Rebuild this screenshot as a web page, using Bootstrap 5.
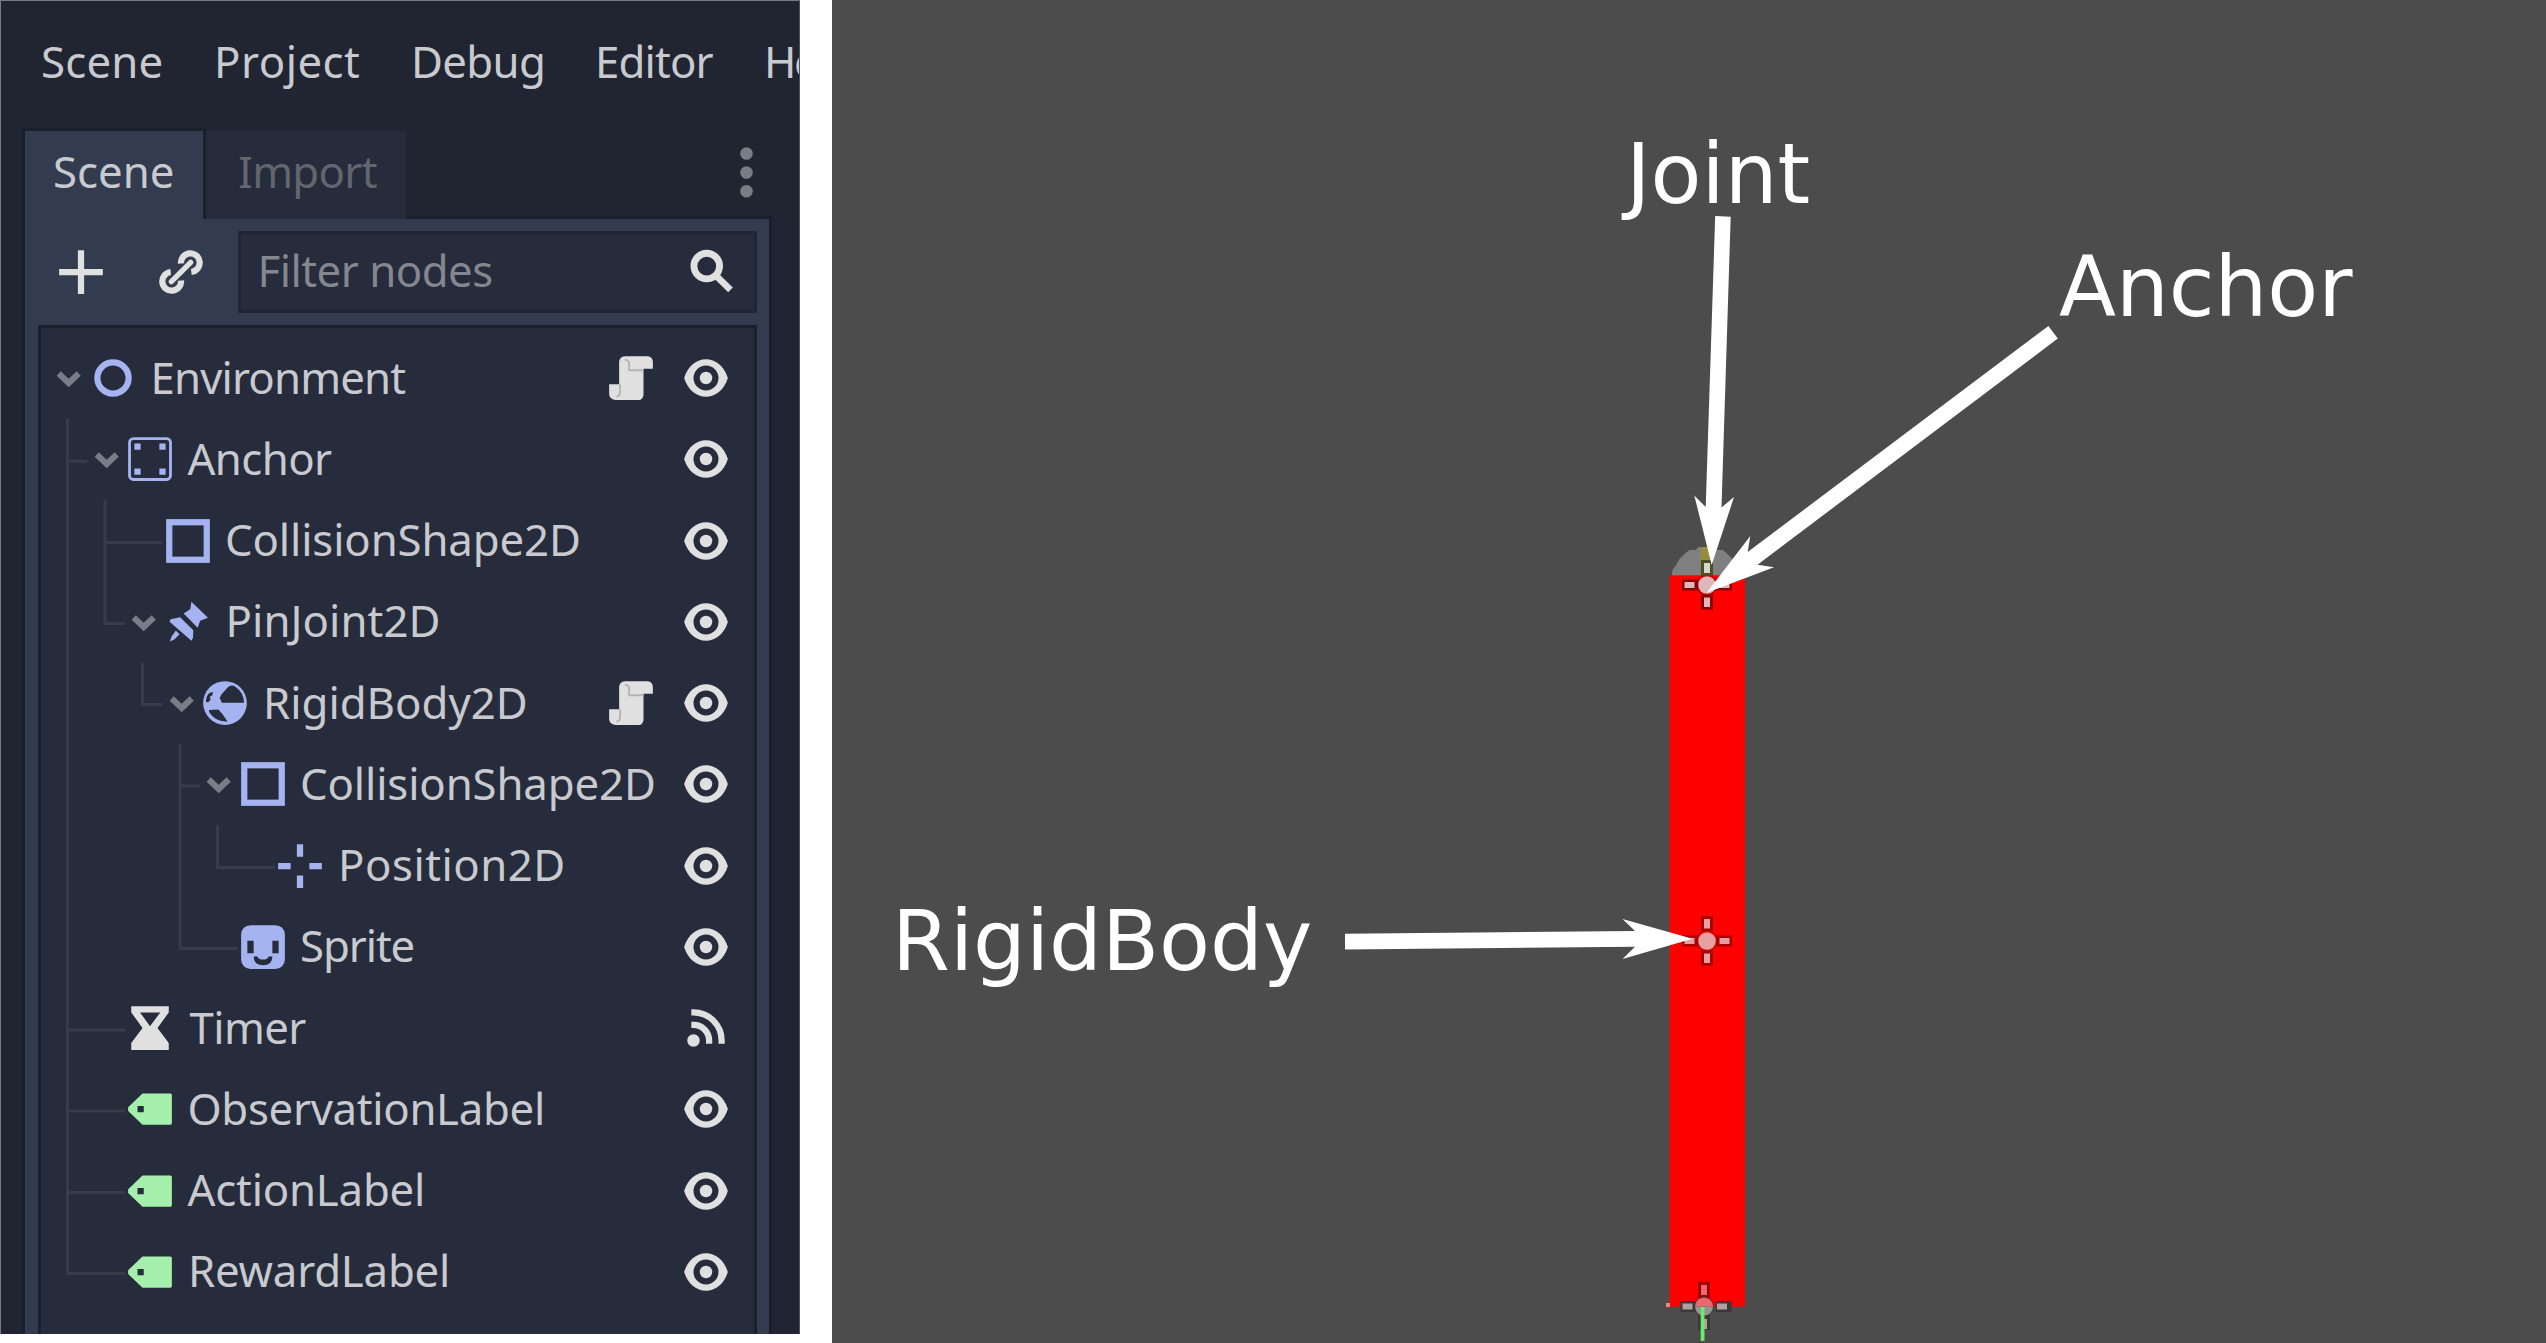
<!DOCTYPE html>
<html lang="en">
<head>
<meta charset="utf-8">
<title>Scene tree</title>
<link href="https://cdn.jsdelivr.net/npm/bootstrap@5.3.0/dist/css/bootstrap.min.css" rel="stylesheet">
<style>
body{margin:0;background:#fff;overflow:hidden}
.stage{width:2546px;height:1343px}
.editor{width:800px;height:1334px;background:#202531;border:solid #777b80;border-width:1px 1px 0 1px;border-right-color:#4b4f58;font:43.75px/60px "Noto Sans",sans-serif;color:#c8cacf;overflow:hidden;white-space:nowrap}
.viewport{width:1714px;height:1343px;background:#4c4c4c}
.menu-row{height:127px;padding:30px 0 0 40px}
.menu-row a{color:inherit;text-decoration:none;flex:none}
.tab-row{height:88px;padding-left:21px}
.tab-on{width:184px;height:91px;background:#333b4f;border:3px solid #191f2b;border-bottom:0;padding:10px 0 0 28px;z-index:1}
.tab-off{width:200px;height:88px;margin-top:3px;background:#262c3b;color:#62666f;padding:10px 0 0 32px}
.dots{width:13px;height:52px;margin:19px 46px 0 auto}
.dock{margin-left:21px;width:750px;height:1118px;background:#333b4f;border:3px solid #191f2b;border-bottom:0;padding:10px 12px 0 13px}
.tool-row{height:86px;padding-left:18px;margin-bottom:10px}
.filter{width:519px;height:82px;margin-left:32px;background:#262c3b;border:3px solid #1f2532;color:#84878f;padding-left:16.5px;padding-right:16.5px}
.tree{height:1012px;width:719px;background:#262c3b;border:3px solid #191f2b;border-bottom:0;padding-top:9.5px}
.guides{left:-3px;top:-3px;width:719px;height:1009px}
.node-row{height:81.25px;padding-right:22.6px;position:relative}
.node-name{margin-left:12.5px;padding-bottom:3px}
.arrow{width:37.5px;height:50px;flex:none}
.ico{width:50px;height:50px;flex:none;display:block}
.c-blue{color:#a5b3f0}.c-green{color:#a5efac}.c-light{color:#e0e0e0}
</style>
<script src="https://cdn.jsdelivr.net/npm/bootstrap@5.3.0/dist/js/bootstrap.bundle.min.js"></script>
</head>
<body>
<svg class="d-none">
<symbol id="node2d" viewBox="0 0 16 16"><circle cx="8" cy="8" r="5" fill="none" stroke="currentColor" stroke-width="2"/></symbol>
<symbol id="static" viewBox="0 0 16 16"><rect x="1.45" y="1.45" width="13.1" height="13.1" rx="1.2" fill="none" stroke="currentColor" stroke-width=".9"/><path fill="currentColor" d="M3 3h2v2H3zM11 3h2v2h-2zM3 11h2v2H3zM11 11h2v2h-2z"/></symbol>
<symbol id="shape" viewBox="0 0 16 16"><rect x="2" y="2" width="12" height="12" fill="none" stroke="currentColor" stroke-width="2" /></symbol>
<symbol id="pin" viewBox="0 0 16 16"><path fill="currentColor" d="M9.1 1.5L8.7 3.9 6.6 5.3 11.1 9.8 11.9 7.6 14.4 6.6zM2.1 7.9L2.4 7.1 5.5 6.5 9.7 10.6 9.6 13 9.1 14zM4.1 10.7L5.3 11.9 3.6 13.6 2.2 14.2 2.7 12.7z"/></symbol>
<symbol id="rigid" viewBox="0 0 16 16"><path fill="currentColor" fill-rule="evenodd" d="M8 1a7 7 0 0 1 0 14A7 7 0 0 1 8 1zM6.3 6.4L6.9 5.2 9 2.9Q10 2 11.2 2.7 14 4.6 14.1 7.9H7zM2.9 10.2L5.9 10.1 7.2 11.6 8.8 13.9Q5 14.2 2.9 10.9zM1.9 7.6Q1.9 5.8 3 4.8L4.1 4.5 4 5.4 3.1 6.1 3.4 6.9 2.6 7.8z"/></symbol>
<symbol id="pos" viewBox="0 0 16 16"><path fill="currentColor" d="M7 1h2v4H7zM7 11h2v4H7zM1 7h4v2H1zM11 7h4v2h-4z"/></symbol>
<symbol id="sprite" viewBox="0 0 16 16"><path fill="currentColor" fill-rule="evenodd" d="M4 1h8a3 3 0 0 1 3 3v8a3 3 0 0 1-3 3H4a3 3 0 0 1-3-3V4a3 3 0 0 1 3-3zM3 6v4h2V6zM11 6v4h2V6zM5 11Q5 13.8 8 13.8T11 11H9.8Q9.500 12 8 12T6.200 11z"/></symbol>
<symbol id="timer" viewBox="0 0 16 16"><path fill="currentColor" fill-rule="evenodd" d="M2 1h12v2L10.400 8 14 12.800V15H2V12.800L5.600 8 2 3zM4.800 3L8 7.400 11.300 3z"/></symbol>
<symbol id="label" viewBox="0 0 16 16"><path fill="currentColor" fill-rule="evenodd" d="M5.600 3H14.500Q15 3 15 3.500V12.500Q15 13 14.500 13H5.600L1 8.600V7.400zM4 7v2h2V7z"/></symbol>
<symbol id="eye" viewBox="0 0 16 16"><path fill="currentColor" fill-rule="evenodd" d="M1 8C2.300 4 5 2 8 2s5.700 2 7 6c-1.300 4-4 6-7 6S2.300 12 1 8zM8 4a4 4 0 0 0 0 8 4 4 0 0 0 0-8z"/><circle cx="8" cy="8" r="2" fill="currentColor"/></symbol>
<symbol id="script" viewBox="0 0 16 16"><path fill="currentColor" d="M6 1h7.500Q15 1.300 15 3v2H12v8.500Q11.700 15 10.500 15H3Q1 14.700 1 13v-3h3.200V2.800Q4.300 1.200 6 1z"/><path d="M6 2.200Q7.400 2.200 7.400 3.500V5.500H12M4.500 10v2.500Q4.500 13.700 3.400 14" fill="none" stroke="#b4b4b4" stroke-width=".6"/></symbol>
<symbol id="signal" viewBox="0 0 16 16"><circle cx="4" cy="12" r="2" fill="currentColor"/><path d="M3.300 3H4a9 9 0 0 1 9 9v1M3.300 7H4a5 5 0 0 1 5 5v1" fill="none" stroke="currentColor" stroke-width="2"/></symbol>
<symbol id="plus" viewBox="0 0 16 16"><path fill="currentColor" d="M7 1h2v6h6v2H9v6H7V9H1V7h6z"/></symbol>
<symbol id="chain" viewBox="0 0 16 16"><g fill="none" stroke="currentColor" stroke-width="2"><path d="M8 5.300A3 3 0 1 1 11.300 8M8 10.700A3 3 0 1 1 4.700 8"/><path d="M4.900 11.100L11.100 4.900" stroke-width="1.700" stroke-linecap="round"/></g></symbol>
<symbol id="search" viewBox="0 0 16 16"><circle cx="6" cy="6.100" r="4.100" fill="none" stroke="currentColor" stroke-width="2.200"/><path d="M8.700 8.900L13.600 13.700" stroke="currentColor" stroke-width="2.100"/></symbol>
<symbol id="marker" viewBox="-26 -26 52 52" overflow="visible"><path fill="var(--edge)" d="M-6-25H6V-10H-6zM-6 9.500H6V24.500H-6zM-25-5.500H-9V5.500H-25zM9-5.500H25V5.500H9z"/><circle r="11" fill="var(--edge)" opacity=".45"/><circle r="8.800" fill="var(--in)"/><path fill="var(--in)" d="M-3-22H3V-12.500H-3zM-3 12.500H3V22H-3zM-22.500-3H-12.500V3H-22.500zM12.500-3H22.500V3H12.500z"/></symbol>
</svg>
<div class="stage d-flex justify-content-between align-items-start">
<section class="editor flex-shrink-0">
  <nav class="menu-row d-flex">
    <a style="width:173px;letter-spacing:.2px">Scene</a><a style="width:197px;letter-spacing:.5px">Project</a><a style="width:184px;letter-spacing:-.65px">Debug</a><a style="width:169px;letter-spacing:-.85px">Editor</a><a style="letter-spacing:-2.5px">Help</a>
  </nav>
  <div class="tab-row d-flex">
    <div class="tab-on position-relative">Scene</div>
    <div class="tab-off" style="letter-spacing:-.7px">Import</div>
    <svg class="dots" viewBox="0 0 13 52" fill="#797d86"><circle cx="6.500" cy="6.500" r="6.300"/><circle cx="6.500" cy="25.500" r="6.300"/><circle cx="6.500" cy="44.300" r="6.300"/></svg>
  </div>
  <div class="dock">
    <div class="tool-row d-flex align-items-center">
      <svg class="ico c-light"><use href="#plus"/></svg>
      <svg class="ico c-light" style="margin-left:50px"><use href="#chain"/></svg>
      <div class="filter d-flex align-items-center justify-content-between"><span class="pb-1" style="letter-spacing:-.5px">Filter nodes</span><svg class="ico c-light"><use href="#search"/></svg></div>
    </div>
    <div class="tree position-relative">
      <svg class="guides position-absolute" viewBox="38 325 719 1009" fill="none" stroke="#373c49" stroke-width="3">
        <path d="M67.500 419V1273.500H125M67.500 461.300H87.500M67.500 1030H125M67.500 1111H125M67.500 1192.500H125M105 500V623.500H125M105 542.500H162M142.500 663V704.500H162.500M180 744V948.500H237M180 786H200M217.500 825V867.500H275"/>
      </svg>
      <div id="rows"></div>
    </div>
  </div>
</section>
<section class="viewport flex-shrink-0">
  <svg class="d-block" width="1714" height="1343" viewBox="832 0 1714 1343">
    <path fill="#808080" d="M1671.500 576l1-6 3-4 4-7 5-5 5-4h6l3-3h15l3 3h6l5 4 5 5 4 7 3 4 1 6z"/>
    <rect x="1700.500" y="547" width="12" height="14" fill="#968c3f"/>
    <rect x="1669.500" y="575.300" width="75.500" height="731.300" fill="#f00"/>
    <rect x="1666" y="1303" width="4" height="4" fill="#e88"/>
    <use href="#marker" x="1681" y="559" width="52" height="52" style="--edge:#8a0000;--in:#dcb8ba"/>
    <path fill="#4f4e22" d="M1701 560h12v15h-12z"/><path fill="#d8d6cc" d="M1704 563h6v10h-6z"/>
    <use href="#marker" x="1681" y="915" width="52" height="52" style="--edge:#a80000;--in:#e6a0a2"/>
    <g>
      <path fill="#a00000" d="M1698 1282h12v16h-12z"/><path fill="#e86a6e" d="M1701 1285h6v10h-6z"/>
      <path fill="#3b3838" d="M1680.500 1301h16v11h-16zM1715.500 1301h16v11h-16zM1698 1315h12v15h-12z"/>
      <path fill="#b0a0a0" d="M1682.500 1303.500h10v6h-10zM1717 1303.500h10v6h-10zM1701 1319h6v10h-6z"/>
      <circle cx="1704" cy="1306.500" r="10.500" fill="#3b3838" opacity=".5"/>
      <path fill="#e86a6e" d="M1695 1306.600a9 9 0 0 1 18 0z"/><path fill="#989292" d="M1695 1306.600a9 9 0 0 0 18 0z"/>
      <path fill="#6fe86f" d="M1700.700 1307h3.800v34h-3.800z"/>
    </g>
    <g fill="#fff">
      <path d="M1715.200 216L1730.700 216.700 1721.500 507.500 1734 497 1711.700 565 1694.300 495.500 1705.700 507z"/>
      <path d="M2048.400 326L2057.800 338.500 1757.500 564.700 1774 567.300 1706.700 592.700 1750.300 536 1747.700 552z"/>
      <path d="M1345 933.700L1635 931 1622.500 919 1692.500 938.700 1622.500 959 1635 946.700 1345 949.500z"/>
      <g font-family="DejaVu Sans, sans-serif" font-size="83.300">
        <text x="1626" y="202.700">Joint</text><text x="2059" y="315.800">Anchor</text><text x="892" y="970.300">RigidBody</text>
      </g>
    </g>
  </svg>
</section>
</div>
<script>
// name, depth, icon, icon colour, letter spacing, extra left margin, expandable, right-hand icons
const nodes=[
['Environment',0,'node2d','blue',-.85,.5,1,['script','eye']],
['Anchor',1,'static','blue',-.6,0,1,['eye']],
['CollisionShape2D',2,'shape','blue',-.13,0,0,['eye']],
['PinJoint2D',2,'pin','blue',.07,.5,1,['eye']],
['RigidBody2D',3,'rigid','blue',0,.5,1,['script','eye']],
['CollisionShape2D',4,'shape','blue',-.13,0,1,['eye']],
['Position2D',5,'pos','blue',.5,.5,0,['eye']],
['Sprite',4,'sprite','blue',-1.1,0,0,['eye']],
['Timer',1,'timer','light',-.6,2,0,['signal']],
['ObservationLabel',1,'label','green',-.32,0,0,['eye']],
['ActionLabel',1,'label','green',-.2,0,0,['eye']],
['RewardLabel',1,'label','green',-.2,.5,0,['eye']]];
const ico=(n,c)=>`<svg class="ico c-${c}"><use href="#${n}"/></svg>`;
document.getElementById('rows').innerHTML=nodes.map(([t,d,i,c,ls,dx,open,right])=>
`<div class="node-row d-flex align-items-center" style="padding-left:${9+37.5*d}px">
<svg class="arrow" viewBox="0 0 37.5 50">${open?'<path d="M8.700 20.500L18.700 30 28.700 20.500" fill="none" stroke="#797d86" stroke-width="6"/>':''}</svg>
${ico(i,c)}<span class="node-name" style="letter-spacing:${ls}px"><span style="margin-left:${dx}px">${t}</span></span>
<span class="ms-auto d-flex" style="gap:25px">${right.map(r=>ico(r,'light')).join('')}</span></div>`).join('');
</script>
</body>
</html>
